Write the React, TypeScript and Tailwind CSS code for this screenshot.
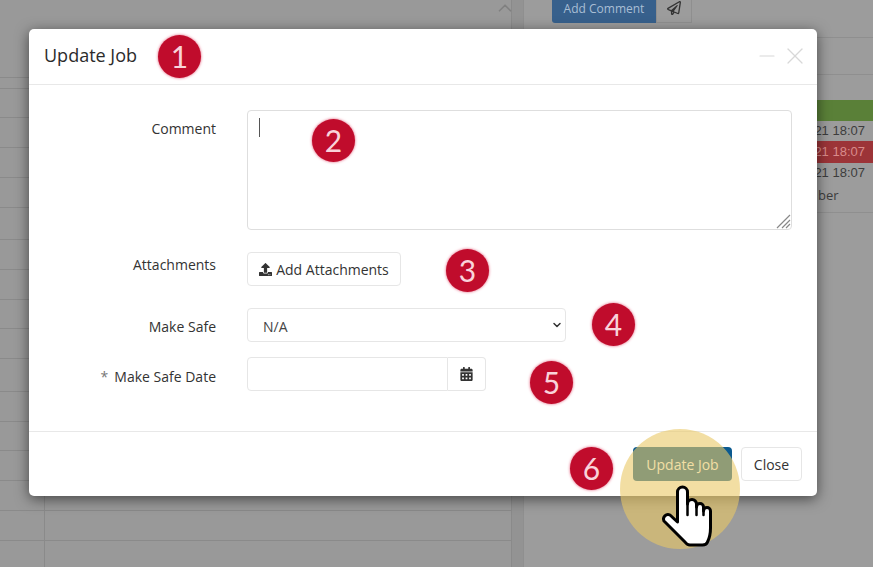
import { ChevronDown, ChevronUp, Minus, X } from "lucide-react";
import { FaCalendarAlt, FaRegPaperPlane, FaUpload } from "react-icons/fa";

const font = "font-['Open_Sans',sans-serif]";

const rowHeights = [29, 30, 30, 30, 32, 30, 30, 29, 30, 33, 30, 29, 30, 30, 30, 30];

function Background() {
  return (
    <div className="flex h-full w-full">
      <div className="h-full w-[512px] shrink-0 border-r border-[#8a8a8a]">
        <div className="flex h-[78px] items-start justify-end border-b border-[#8a8a8a]">
          <ChevronUp className="mr-[-5px] mt-[-3px] h-[22px] w-[22px] text-[#808080]" strokeWidth={1.8} />
        </div>
        <div className="h-[11px] border-b border-[#8a8a8a]" />
        {rowHeights.map((h, i) => (
          <div key={i} className="flex border-b border-[#8a8a8a]" style={{ height: h }}>
            <div className="h-full w-[45px] border-r border-[#8a8a8a]" />
          </div>
        ))}
      </div>
      <div className="h-full w-[11px] shrink-0 bg-[#939393]" />
      <div className="h-full flex-1 border-l border-[#8f8f8f] bg-[#9c9c9c] text-[13px] text-[#3c3c3c]">
        <div className="h-[38px] border-b border-[#8f8f8f] pl-[28px]">
          <div className="flex h-[23px]">
            <div className="flex w-[104px] items-center justify-center rounded-bl-[3px] bg-[#37608c] pb-[6px] text-[12px] text-[#a9bed4]">
              Add Comment
            </div>
            <div className="flex w-[36px] items-center justify-center border border-t-0 border-[#8f8f8f] pb-[6px]">
              <FaRegPaperPlane className="h-[14px] w-[14px] text-[#333]" />
            </div>
          </div>
        </div>
        <div className="h-[37px] border-b border-[#8f8f8f]" />
        <div className="pt-[25px] text-right">
          <div className="h-[21px] bg-[#5a8038]" />
          <div className="h-[20px] pr-[8px] font-['Liberation_Sans',sans-serif] leading-[20px]">21 18:07</div>
          <div className="h-[22px] bg-[#9c3438] pr-[8px] font-['Liberation_Sans',sans-serif] leading-[22px] text-[#d98b8b]">21 18:07</div>
          <div className="h-[20px] pr-[8px] font-['Liberation_Sans',sans-serif] leading-[20px]">21 18:07</div>
          <div className="h-[24px] pl-[294px] text-left leading-[24px]">ber</div>
          <div className="mt-[5px] border-b border-[#8f8f8f]" />
        </div>
      </div>
    </div>
  );
}

function Badge({ n, className }: { n: number; className: string }) {
  return (
    <div
      className={`absolute flex h-[43px] w-[43px] items-center justify-center rounded-full bg-[#c00c2c] font-['Lato',sans-serif] text-[30px] font-normal text-[#f9d3da] shadow-[0_0_3px_#e0506f] ${className}`}
    >
      {n}
    </div>
  );
}

function Hand() {
  return (
    <svg viewBox="0 0 54 65" className="absolute left-[660px] top-[484px] h-[65px] w-[54px]">
      <path
        d="M17.5 8a5 5 0 0 1 10 0V20a4.5 4.5 0 0 1 9 0V23a3.5 3.5 0 0 1 7 0V27a3.5 3.5 0 0 1 7 0V44q0 8-3 14q-1 3-5 3H30q-3 0-5-3L4 37a4.5 4.5 0 0 1 6-6L17.5 38Z"
        fill="#fff"
        stroke="#000"
        strokeWidth="3"
        strokeLinejoin="round"
      />
      <path d="M27.5 20V31M36.5 23V31M43.5 27V31" fill="none" stroke="#000" strokeWidth="2.5" strokeLinecap="round" />
    </svg>
  );
}

function FormRow({ label, labelClass, children }: { label: React.ReactNode; labelClass: string; children: React.ReactNode }) {
  return (
    <div className="flex">
      <label className={`w-[187px] shrink-0 text-right text-[14px] leading-[18px] text-[#333] ${labelClass}`}>{label}</label>
      <div className="ml-[31px]">{children}</div>
    </div>
  );
}

export default function App() {
  return (
    <div className={`relative h-[567px] w-[873px] overflow-hidden bg-[#999999] ${font}`}>
      <Background />

      <div className="absolute left-[29px] top-[29px] h-[467px] w-[788px] rounded-[5px] bg-white shadow-[0_3px_14px_rgba(0,0,0,0.55)]">
        <div className="flex h-[56px] items-center justify-between border-b border-[#e8e8e8] pl-[15px] pr-[8px]">
          <h1 className="pb-[2px] text-[18px] text-[#2b2b2b]">Update Job</h1>
          <div className="flex items-center gap-[2px] pb-[2px] text-[#d8d8d8]">
            <Minus className="h-[24px] w-[24px]" strokeWidth={1.2} />
            <X className="h-[28px] w-[28px]" strokeWidth={1.1} />
          </div>
        </div>

        <div className="flex h-[347px] flex-col border-b border-[#e8e8e8] pt-[25px]">
          <FormRow label="Comment" labelClass="pt-[10px]">
            <div className="relative h-[120px] w-[545px]">
              <textarea readOnly className="h-full w-full resize-none rounded-[4px] border border-[#dedede] bg-white outline-none" />
              <div className="absolute left-[12px] top-[8px] h-[19px] w-[1px] bg-[#555]" />
              <svg viewBox="0 0 15 15" className="absolute bottom-[1px] right-[1px] h-[15px] w-[15px]">
                <path d="M1 14L14 1M6 14L14 6M10 14L14 10" stroke="#888" strokeWidth="1.2" fill="none" />
              </svg>
            </div>
          </FormRow>

          <div className="mt-[22px]">
            <FormRow label="Attachments" labelClass="pt-[4px]">
              <button className="flex h-[34px] w-[154px] items-center justify-center gap-[4px] rounded-[4px] border border-[#e6e6e6] bg-white text-[14px] text-[#333]">
                <FaUpload className="h-[13px] w-[13px]" />
                Add Attachments
              </button>
            </FormRow>
          </div>

          <div className="mt-[22px]">
            <FormRow label="Make Safe" labelClass="pt-[10px]">
              <div className="relative h-[34px] w-[319px]">
                <select className="h-full w-full appearance-none rounded-[4px] border border-[#e6e6e6] bg-white pl-[15px] pt-[2px] text-[14px] text-[#444] outline-none">
                  <option>N/A</option>
                </select>
                <ChevronDown className="absolute right-[3px] top-[11px] h-[12px] w-[12px] text-[#333]" strokeWidth={3} />
              </div>
            </FormRow>
          </div>

          <div className="mt-[15px]">
            <FormRow
              label={
                <>
                  <span className="mr-[6px] text-[#777]">*</span>Make Safe Date
                </>
              }
              labelClass="pt-[11px]"
            >
              <div className="flex h-[34px] w-[239px]">
                <input readOnly className="h-full min-w-0 flex-1 rounded-l-[4px] border border-[#e6e6e6] bg-white outline-none" />
                <div className="flex h-full w-[38px] shrink-0 items-center justify-center rounded-r-[4px] border border-l-0 border-[#e6e6e6]">
                  <FaCalendarAlt className="h-[14px] w-[13px] text-[#333]" />
                </div>
              </div>
            </FormRow>
          </div>
        </div>

        <div className="flex justify-end gap-[9px] pr-[15px] pt-[15px]">
          <button className="h-[34px] w-[99px] rounded-[4px] bg-[#0b5a90] text-[14px] text-white">Update Job</button>
          <button className="h-[34px] w-[61px] rounded-[4px] border border-[#e6e6e6] bg-white text-[14px] text-[#333]">Close</button>
        </div>
      </div>

      <Badge n={1} className="left-[158px] top-[35px]" />
      <Badge n={2} className="left-[312px] top-[119px]" />
      <Badge n={3} className="left-[446px] top-[249px]" />
      <Badge n={4} className="left-[592px] top-[303px]" />
      <Badge n={5} className="left-[530px] top-[361px]" />
      <Badge n={6} className="left-[570px] top-[447px]" />

      <div className="absolute left-[620px] top-[429px] h-[120px] w-[120px] rounded-full bg-[#eac866]/60" />
      <Hand />
    </div>
  );
}
